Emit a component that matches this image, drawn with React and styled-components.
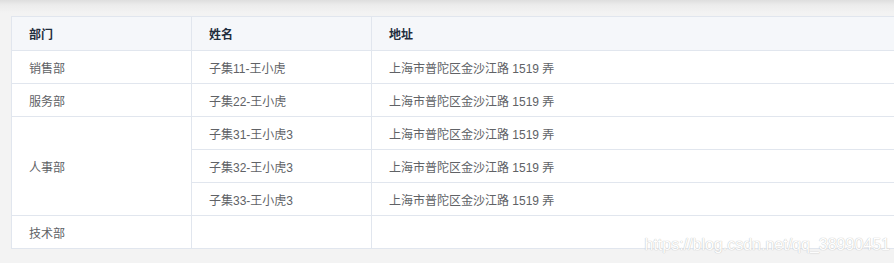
import React from 'react';
import styled, { createGlobalStyle } from 'styled-components';

const Global = createGlobalStyle`
  html, body {
    margin: 0;
    padding: 0;
    background: #f3f3f3;
  }
  body {
    font-family: "Liberation Sans", "Noto Sans CJK SC", Arial, sans-serif;
  }
`;

const Page = styled.div`
  position: relative;
  height: 263px;
  overflow: hidden;
  padding: 16px 0 0 11px;
  box-sizing: border-box;
  background: linear-gradient(to bottom, #dedede 0px, #ececec 5px, #f3f3f3 13px, #f3f3f3 100%);
`;

const Table = styled.table`
  border-collapse: collapse;
  width: 900px;
  table-layout: fixed;
  background: #fff;
  font-size: 12px;
  color: #606266;
`;

const Th = styled.th`
  height: 34px;
  padding: 0 0 0 17px;
  text-align: left;
  font-weight: bold;
  color: #1f2d3d;
  background: #f5f7fa;
  border: 1px solid #e1e6ee;
  box-sizing: border-box;
`;

const Td = styled.td`
  height: 33px;
  padding: 0 0 0 17px;
  border: 1px solid #e1e6ee;
  box-sizing: border-box;
  vertical-align: middle;
`;

const Watermark = styled.div`
  position: absolute;
  right: 4px;
  bottom: 9px;
  font-size: 16px;
  font-family: "Liberation Sans", Arial, sans-serif;
  color: #fff;
  opacity: 0.9;
  text-shadow: 0 0 1px #c0c0c0, 0 0 1px #c0c0c0;
`;

const addr = '上海市普陀区金沙江路 1519 弄';

const rows = [
  { dept: '销售部', span: 1, people: ['子集11-王小虎'] },
  { dept: '服务部', span: 1, people: ['子集22-王小虎'] },
  { dept: '人事部', span: 3, people: ['子集31-王小虎3', '子集32-王小虎3', '子集33-王小虎3'] },
  { dept: '技术部', span: 1, people: [null] },
];

export default function App() {
  return (
    <>
      <Global />
      <Page>
        <Table>
          <colgroup>
            <col style={{ width: 180 }} />
            <col style={{ width: 180 }} />
            <col />
          </colgroup>
          <thead>
            <tr>
              <Th>部门</Th>
              <Th>姓名</Th>
              <Th>地址</Th>
            </tr>
          </thead>
          <tbody>
            {rows.map((r) =>
              r.people.map((p, i) => (
                <tr key={r.dept + i}>
                  {i === 0 && <Td rowSpan={r.span}>{r.dept}</Td>}
                  <Td>{p}</Td>
                  <Td>{p ? addr : ''}</Td>
                </tr>
              ))
            )}
          </tbody>
        </Table>
        <Watermark>https://blog.csdn.net/qq_38990451</Watermark>
      </Page>
    </>
  );
}
